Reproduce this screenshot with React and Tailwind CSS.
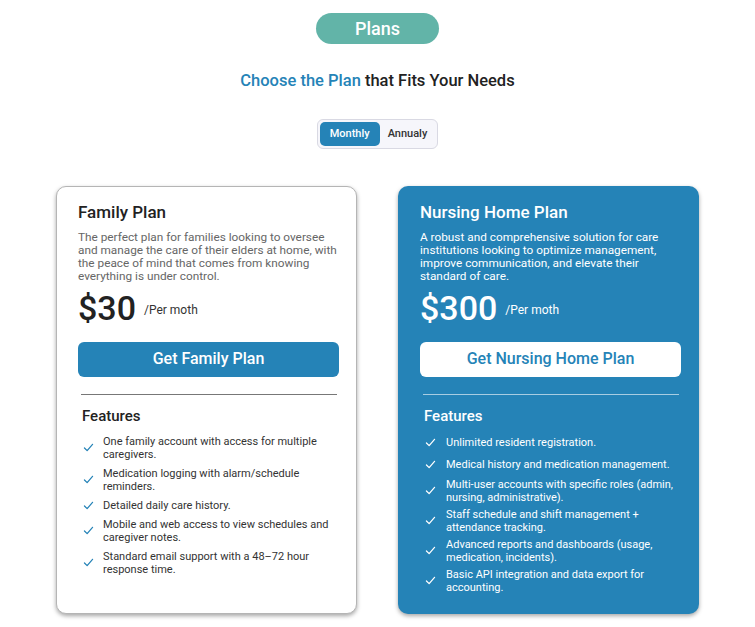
import React from 'react';

const font = { fontFamily: 'Roboto, Inter, "Noto Sans", sans-serif' };

const family = [
  'One family account with access for multiple caregivers.',
  'Medication logging with alarm/schedule reminders.',
  'Detailed daily care history.',
  'Mobile and web access to view schedules and caregiver notes.',
  'Standard email support with a 48–72 hour response time.',
];

const nursing = [
  'Unlimited resident registration.',
  'Medical history and medication management.',
  'Multi-user accounts with specific roles (admin, nursing, administrative).',
  'Staff schedule and shift management + attendance tracking.',
  'Advanced reports and dashboards (usage, medication, incidents).',
  'Basic API integration and data export for accounting.',
];

const Check = ({ className }) => (
  <svg viewBox="0 0 12 10" className={className} fill="none" stroke="currentColor" strokeWidth="1.4" strokeLinecap="round" strokeLinejoin="round">
    <path d="M1.5 5.5 L4.5 8.5 L10.5 1.5" />
  </svg>
);

const PlanCard = ({ title, desc, price, cta, features, dark }) => (
  <div
    className={
      dark
        ? 'flex flex-col rounded-[10px] bg-[#2583b7] text-white pl-[22px] pr-[18px] pt-[14px] pb-[18px] shadow-[0_2px_4px_rgba(0,0,0,0.35)]'
        : 'flex flex-col rounded-[10px] bg-white text-[#222] border border-[#b5b5b5] pl-[21px] pr-[17px] pt-[13px] pb-[18px] shadow-[0_2px_4px_rgba(0,0,0,0.35)]'
    }
  >
    <h3 className="text-[17px] font-medium leading-6">{title}</h3>
    <p className={`mt-[7px] text-[11.8px] leading-[13px] ${dark ? 'text-white' : 'text-[#666]'}`}>
      {desc.map((line) => (
        <span key={line} className="block whitespace-nowrap">{line}</span>
      ))}
    </p>
    <div className="mt-[5px] flex items-center gap-2">
      <span className="text-[34px] font-medium leading-10">{price}</span>
      <span className={`text-[12px] mt-1 ${dark ? 'text-white' : 'text-[#333]'}`}>/Per moth</span>
    </div>
    <button
      className={
        dark
          ? 'mt-[14px] h-[35px] w-full rounded-md bg-white text-[#2583b7] text-[16px] font-medium'
          : 'mt-[14px] h-[35px] w-full rounded-md bg-[#2583b7] text-white text-[16px] font-medium'
      }
    >
      {cta}
    </button>
    <div className={`mt-[17px] ml-[3px] mr-[2px] border-t ${dark ? 'border-[#a8cde2]' : 'border-[#777]'}`} />
    <h4 className="mt-[11px] ml-1 text-[15px] font-medium leading-5">Features</h4>
    {dark ? (
      <ul className="mt-[6px] ml-[5px] flex flex-col">
        {features.map((f) => (
          <li key={f} className="flex items-center gap-[10px] min-h-[22px] py-[2px]">
            <Check className="w-[11px] h-[9px] shrink-0 text-white" />
            <span className="text-[11px] leading-[13px] text-white">{f}</span>
          </li>
        ))}
      </ul>
    ) : (
      <ul className="mt-[9px] ml-[5px] flex flex-col gap-[6px]">
        {features.map((f) => (
          <li key={f} className="flex items-center gap-[9px]">
            <Check className="w-[11px] h-[9px] shrink-0 text-[#2583b7]" />
            <span className="text-[11px] leading-[13px] text-[#333]">{f}</span>
          </li>
        ))}
      </ul>
    )}
  </div>
);

export default function App() {
  return (
    <div className="min-h-screen bg-white flex flex-col items-center pt-[13px]" style={font}>
      <div className="w-[123px] h-[31px] rounded-full bg-[#62b4a8] flex items-center justify-center text-white text-[18px] font-medium">
        Plans
      </div>
      <h2 className="mt-[25px] text-[16.5px] font-medium text-[#222]">
        <span className="text-[#2583b7]">Choose the Plan</span> that Fits Your Needs
      </h2>
      <div className="mt-[25px] flex items-center p-[2px] rounded-md border border-[#d9d9e3] bg-[#f6f6fb]">
        <button className="h-6 px-[10px] rounded-[5px] bg-[#2583b7] text-white text-[11px] font-medium">Monthly</button>
        <button className="h-6 px-[8px] text-[#333] text-[11px] font-medium">Annualy</button>
      </div>
      <div className="mt-[37px] grid grid-cols-2 gap-[41px] w-[643px]">
        <PlanCard
          title="Family Plan"
          desc={[
            'The perfect plan for families looking to oversee',
            'and manage the care of their elders at home, with',
            'the peace of mind that comes from knowing',
            'everything is under control.',
          ]}
          price="$30"
          cta="Get Family Plan"
          features={family}
        />
        <PlanCard
          dark
          title="Nursing Home Plan"
          desc={[
            'A robust and comprehensive solution for care',
            'institutions looking to optimize management,',
            'improve communication, and elevate their',
            'standard of care.',
          ]}
          price="$300"
          cta="Get Nursing Home Plan"
          features={nursing}
        />
      </div>
    </div>
  );
}
